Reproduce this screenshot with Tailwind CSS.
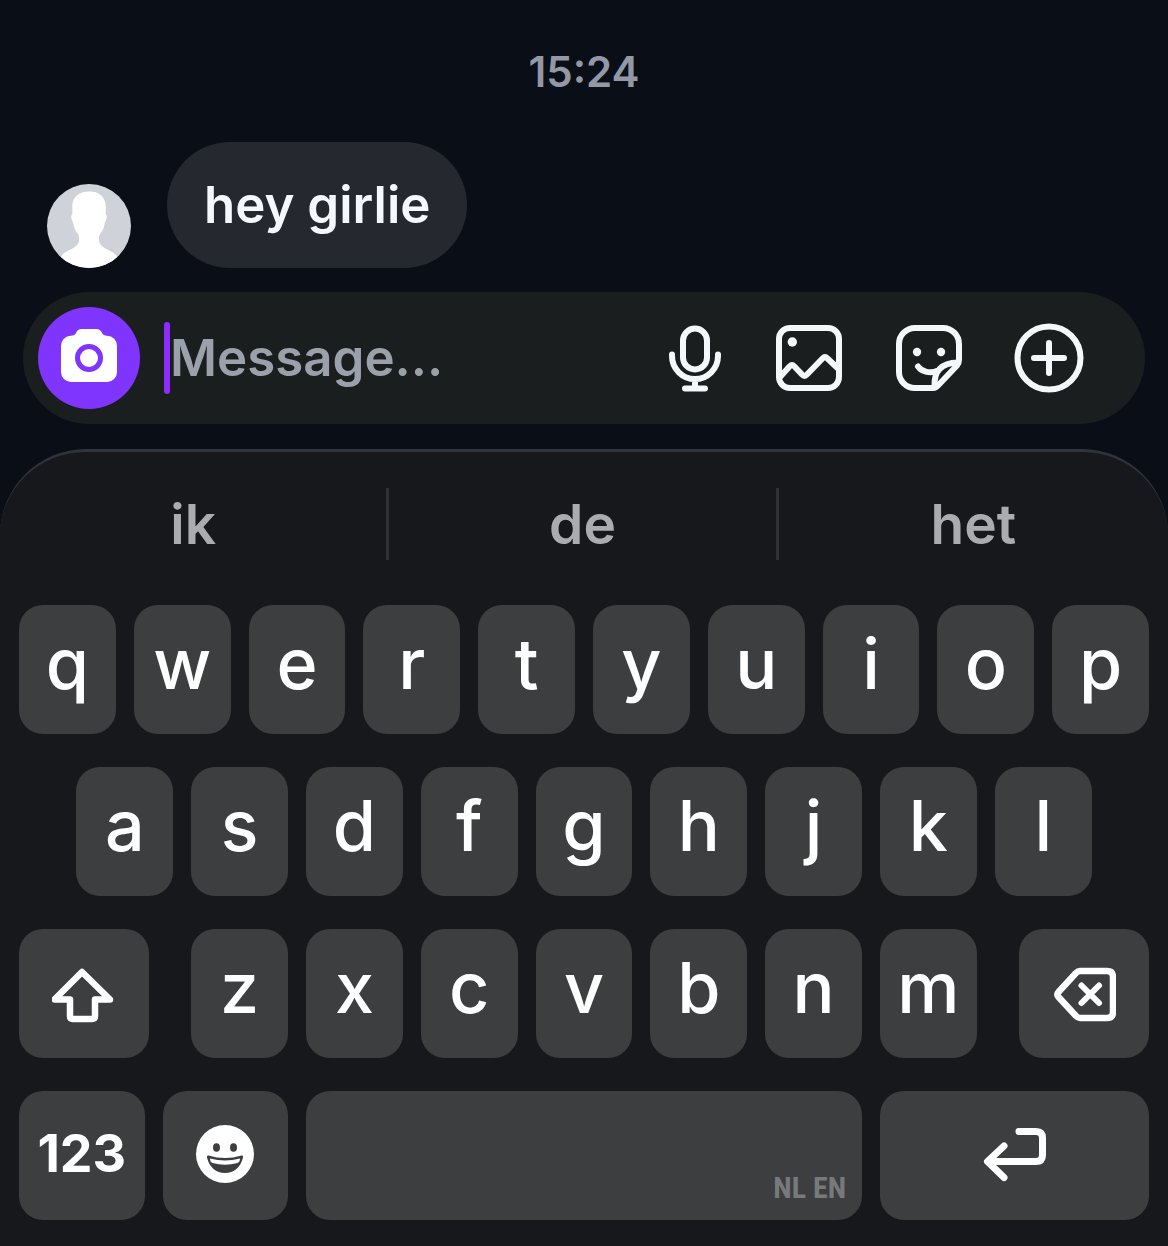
<!DOCTYPE html>
<html lang="nl" class="h-full bg-[#0a0e16]">
  <head>
    <meta charset="UTF-8" />
    <meta name="viewport" content="width=device-width, initial-scale=1.0" />
    <title>Direct message</title>
    <script src="https://cdn.jsdelivr.net/npm/@tailwindcss/browser@4"></script>
  </head>
  <body class="min-h-full flex flex-col font-['Inter',sans-serif] text-white">
    <!-- Conversation -->
    <main class="grow pt-10">
      <p class="text-center text-[42px] leading-16 font-semibold text-[#9299a5]">
        <time>15:24</time>
      </p>
      <div class="mt-[38px] px-[47px] flex items-end gap-9">
        <svg class="size-[84px] shrink-0 rounded-full bg-[#cfd3d9]" viewBox="0 0 84 84" fill="#fff" role="img" aria-label="Profile picture">
          <path d="M42 7.500C49 6.800 59 11 58.800 23L58.600 30C60.500 31 59.800 36 58 38C57 44 55.500 47 53 50C51.800 52 52 54 52 57C53 63 60 65 66 68.500C70 71 74 77 74 84H10C10 77 14 71 18 68.500C24 65 31 63 32 57C32 54 32.200 52 31 50C28.500 47 27 44 26 38C24.200 36 23.500 31 25.400 30L25.300 22C25.500 13 32 7.500 42 7.500Z" />
        </svg>
        <p class="rounded-[63px] bg-[#25292f] px-[37px] py-[31px] text-[51px] leading-16 font-semibold text-[#f5f8fd]">
          hey girlie
        </p>
      </div>
    </main>

    <!-- Composer -->
    <form class="mx-[23px] mt-6 mb-[25px] flex items-center rounded-full bg-[#1b1e1f] py-[15px] pl-[15px] pr-[60px] text-[#f5f8fb]">
      <button type="button" aria-label="Camera" class="size-[102px] shrink-0 flex items-center justify-center rounded-full bg-[#8035ff] text-white">
        <svg class="size-15" viewBox="0 0 60 60" fill="none">
          <path fill="currentColor" d="M23 1h14c3.500 0 4.800 1.500 6 4 1 2 2.500 2.700 5 2.700A10 10 0 0 1 58 18v26a10 10 0 0 1-10 10H12A10 10 0 0 1 2 44V18A10 10 0 0 1 12 7.700c2.500 0 4-.7 5-2.700 1.200-2.500 2.500-4 6-4z" />
          <circle cx="30" cy="30" r="11.500" stroke="#8035ff" stroke-width="5" />
        </svg>
      </button>
      <span class="ml-6 h-[72px] w-1.5 shrink-0 rounded-full bg-[#8f2bff]"></span>
      <input type="text" aria-label="Message" placeholder="Message..." class="h-[72px] min-w-0 grow bg-transparent text-[51px] font-semibold outline-none placeholder:text-[#9ba1ab]" />
      <div class="flex shrink-0 gap-12">
        <button type="button" aria-label="Voice message">
          <svg class="block h-[72px] w-15" viewBox="0 0 60 72" fill="none" stroke="currentColor" stroke-width="6" stroke-linecap="round" stroke-linejoin="round">
            <rect x="18" y="6.500" width="24" height="41" rx="12" />
            <path d="M7 32.500V34a23 23 0 0 0 46 0v-1.500M30 57v9.500M20 66.500h20" />
          </svg>
        </button>
        <button type="button" aria-label="Photo">
          <svg class="block size-[72px]" viewBox="0 0 72 72" fill="none" stroke="currentColor" stroke-width="6" stroke-linecap="round" stroke-linejoin="round">
            <rect x="6" y="6" width="60" height="60" rx="11" />
            <circle cx="19.300" cy="20" r="4.700" fill="currentColor" stroke="none" />
            <path d="M7 55L16.500 44.500Q19 42 21.500 44.500L29 52.500Q31.500 55 34 52.500L49.500 36.500Q52 34 54.500 36.500L65 46.500" />
          </svg>
        </button>
        <button type="button" aria-label="Sticker">
          <svg class="block size-[72px]" viewBox="0 0 72 72" fill="none" stroke="currentColor" stroke-width="6" stroke-linecap="round" stroke-linejoin="round">
            <path d="M40 66H22A16 16 0 0 1 6 50V22A16 16 0 0 1 22 6H50A16 16 0 0 1 66 22V38Q66 41 64 43.500L45 63.500Q43 66 40 66" />
            <path d="M41.500 64C41 49 48 41 65 40.500M25 44.500C29 50 37 52 45 48.500" />
            <circle cx="24" cy="30" r="4.200" fill="currentColor" stroke="none" />
            <circle cx="48" cy="30" r="4.200" fill="currentColor" stroke="none" />
          </svg>
        </button>
        <button type="button" aria-label="More">
          <svg class="block size-[72px]" viewBox="0 0 72 72" fill="none" stroke="currentColor" stroke-width="6" stroke-linecap="round">
            <circle cx="36" cy="36" r="31.500" />
            <path d="M21 36h30M36 21v30" />
          </svg>
        </button>
      </div>
    </form>

    <!-- Keyboard -->
    <section aria-label="Keyboard" class="rounded-t-[86px] border-t-3 border-[#2e343a] bg-[#17181b] pt-9 pb-[27px]">
      <div class="grid grid-cols-3 divide-x-3 divide-[#303134] text-[55px] leading-[72px] font-semibold text-[#abacb0]">
        <button type="button">ik</button>
        <button type="button">de</button>
        <button type="button">het</button>
      </div>

      <div class="mt-[45px] grid grid-cols-[repeat(20,minmax(0,1fr))] auto-rows-[129px] gap-x-[18px] gap-y-[33px] px-[19px] text-[70px] font-medium *:rounded-3xl *:bg-[#3c3e3f]">
        <button type="button" class="col-span-2 pb-3">q</button>
        <button type="button" class="col-span-2 pb-3">w</button>
        <button type="button" class="col-span-2 pb-3">e</button>
        <button type="button" class="col-span-2 pb-3">r</button>
        <button type="button" class="col-span-2 pb-3">t</button>
        <button type="button" class="col-span-2 pb-3">y</button>
        <button type="button" class="col-span-2 pb-3">u</button>
        <button type="button" class="col-span-2 pb-3">i</button>
        <button type="button" class="col-span-2 pb-3">o</button>
        <button type="button" class="col-span-2 pb-3">p</button>

        <button type="button" class="col-span-2 col-start-2 pb-3">a</button>
        <button type="button" class="col-span-2 pb-3">s</button>
        <button type="button" class="col-span-2 pb-3">d</button>
        <button type="button" class="col-span-2 pb-3">f</button>
        <button type="button" class="col-span-2 pb-3">g</button>
        <button type="button" class="col-span-2 pb-3">h</button>
        <button type="button" class="col-span-2 pb-3">j</button>
        <button type="button" class="col-span-2 pb-3">k</button>
        <button type="button" class="col-span-2 pb-3">l</button>

        <button type="button" aria-label="Shift" class="col-span-3 col-start-1 mr-6 flex items-center justify-center">
          <svg class="size-16" viewBox="0 0 64 64" fill="none" stroke="currentColor" stroke-width="6.500" stroke-linecap="round" stroke-linejoin="round">
            <path d="M30 10L2.500 37.500H18V54Q18 57 21 57H40Q43 57 43 54V37.500H58Z" />
          </svg>
        </button>
        <button type="button" class="col-span-2 pb-3">z</button>
        <button type="button" class="col-span-2 pb-3">x</button>
        <button type="button" class="col-span-2 pb-3">c</button>
        <button type="button" class="col-span-2 pb-3">v</button>
        <button type="button" class="col-span-2 pb-3">b</button>
        <button type="button" class="col-span-2 pb-3">n</button>
        <button type="button" class="col-span-2 pb-3">m</button>
        <button type="button" aria-label="Delete" class="col-span-3 ml-6 flex items-center justify-center">
          <svg class="size-16" viewBox="0 0 64 64" fill="none" stroke="currentColor" stroke-width="6.500" stroke-linecap="round" stroke-linejoin="round">
            <path d="M28 9H55Q61 9 61 15V50Q61 56 55 56H28Q26 56 24 54L6.500 35Q4 32.500 6.500 30L24 11Q26 9 28 9Z" />
            <path d="M29.500 23.500L47 41M47 23.500L29.500 41" stroke-width="6" />
          </svg>
        </button>

        <div class="col-span-5 grid grid-cols-2 gap-[18px] bg-transparent! *:rounded-3xl *:bg-[#3c3e3f]">
          <button type="button" class="pb-1 text-[52px] font-bold">123</button>
          <button type="button" aria-label="Emoji" class="flex items-center justify-center">
            <svg class="size-16" viewBox="0 0 64 64">
              <circle cx="32" cy="30" r="29" fill="#fff" />
              <g fill="#3c3e3f">
                <ellipse cx="23.500" cy="23.500" rx="3.500" ry="4.300" />
                <ellipse cx="40.500" cy="23.500" rx="3.500" ry="4.300" />
                <path d="M15.500 31.500Q32 36.500 48.500 31.500Q50.500 31.200 50 33.500C47.500 43.500 41 49 32 49S16.500 43.500 14 33.500Q13.500 31.200 15.500 31.500Z" />
              </g>
              <path fill="#fff" d="M17 34.500Q32 38.500 47 34.500Q47 38 44.500 39Q32 42.500 19.500 39Q17 38 17 34.500Z" />
            </svg>
          </button>
        </div>
        <button type="button" aria-label="Space" class="col-span-10 flex items-end justify-end px-4 pb-3 font-['Roboto_Condensed','Open_Sans_Condensed','Noto_Sans_ExtraCondensed','Noto_Sans_Condensed','Roboto',sans-serif] text-[30px] leading-10 font-bold text-[#77797a]">
          NL EN
        </button>
        <button type="button" aria-label="Return" class="col-span-5 flex items-center justify-center">
          <svg class="size-16" viewBox="0 0 64 64" fill="none" stroke="currentColor" stroke-width="7" stroke-linecap="round" stroke-linejoin="round">
            <path d="M36 7.500H53Q59.500 7.500 59.500 14V31Q59.500 37.500 53 37.500H5M21 22L4.500 37.500L21 53.500" />
          </svg>
        </button>
      </div>
    </section>
  </body>
</html>
